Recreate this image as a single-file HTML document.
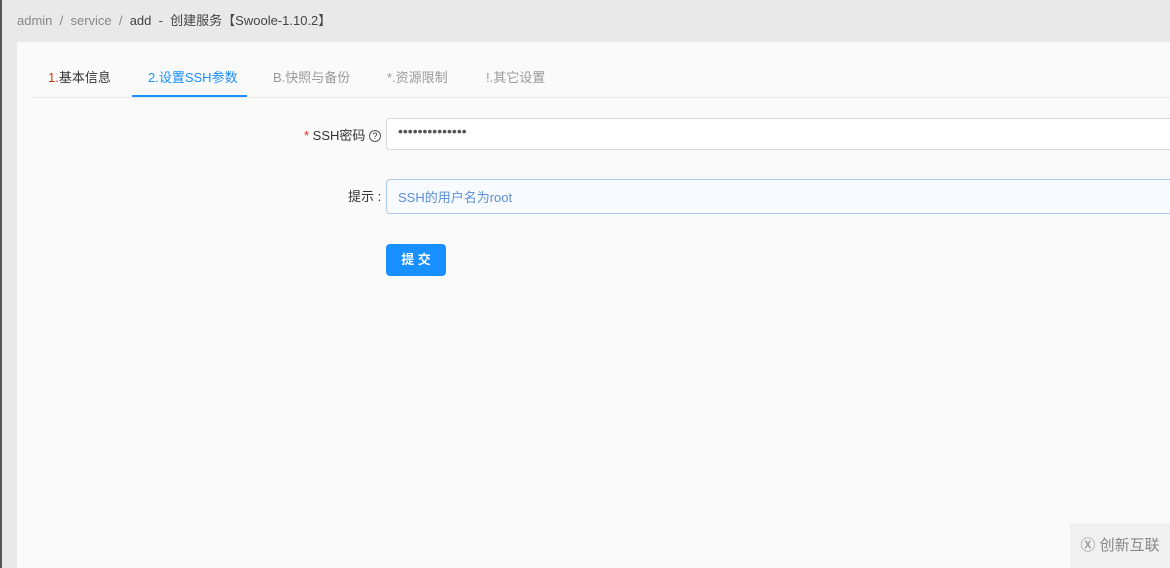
<!DOCTYPE html>
<html><head><meta charset="utf-8"><style>
body{margin:0;width:1170px;height:568px;background:#e9e9e9;font-family:"Liberation Sans","Noto Sans CJK SC",sans-serif;position:relative;overflow:hidden}
.lb{position:absolute;left:0;top:0;width:2px;height:568px;background:#555}
.bc{position:absolute;left:17px;top:10px;font-size:13px;color:#888}
.bc b{font-weight:normal;color:#444}
.card{position:absolute;left:17px;top:42px;width:1153px;height:526px;background:#fafafa}
.tab{position:absolute;top:67px;font-size:13px;color:#999}
.line{position:absolute;left:32px;top:97px;width:1138px;height:1px;background:#e8e8e8}
.ul{position:absolute;left:132px;top:95px;width:115px;height:2px;background:#1890ff}
.inp{position:absolute;left:386px;width:800px;border:1px solid #d9d9d9;border-radius:4px;background:#fff;box-sizing:border-box}
.lab{position:absolute;font-size:13px;color:#333}
.btn{position:absolute;left:386px;top:244px;width:60px;height:32px;background:#1890ff;border-radius:4px;color:#fff;font-size:13px;text-align:center;line-height:32px;font-weight:bold}
</style></head><body>
<div class="lb"></div>
<div class="bc">admin &nbsp;/&nbsp; service &nbsp;/&nbsp; <b>add &nbsp;- &nbsp;创建服务【Swoole-1.10.2】</b></div>
<div class="card"></div>
<div class="tab" style="left:48px;color:#333"><span style="color:#d4380d">1.</span>基本信息</div>
<div class="tab" style="left:148px;color:#1890ff">2.设置SSH参数</div>
<div class="tab" style="left:273px">B.快照与备份</div>
<div class="tab" style="left:387px">*.资源限制</div>
<div class="tab" style="left:486px">!.其它设置</div>
<div class="line"></div><div class="ul"></div>
<div class="lab" style="left:304px;top:125px"><span style="color:#f5222d">*</span> SSH密码 <span style="display:inline-block;width:10px;height:10px;border:1px solid #555;border-radius:50%;font-size:9px;line-height:10px;text-align:center;vertical-align:1px">?</span></div>
<div class="inp" style="top:118px;height:32px;padding:4px 11px;font-size:14px;color:#555;letter-spacing:0px">••••••••••••••</div>
<div class="lab" style="left:348px;top:186px">提示 :</div>
<div class="inp" style="top:179px;height:35px;background:#f7faff;border-color:#abc9ef;padding:7px 11px;font-size:13px;color:#5b8fd6">SSH的用户名为root</div>
<div class="btn">提 交</div>
<div style="position:absolute;left:1070px;top:523px;width:100px;height:45px;background:#f0f0f0;color:#888;font-size:15px;line-height:45px;text-align:center">Ⓧ 创新互联</div>
</body></html>
